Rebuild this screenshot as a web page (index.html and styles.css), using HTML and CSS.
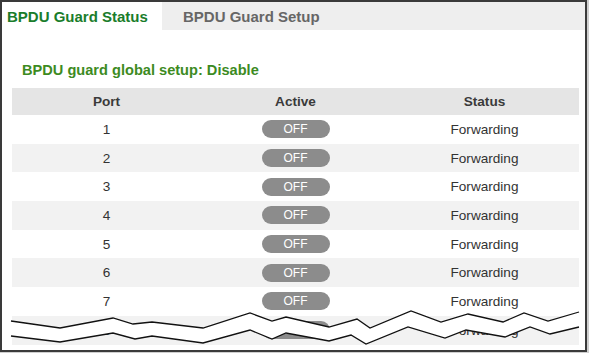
FILE: index.html
```html
<!DOCTYPE html>
<html lang="en">
<head>
  <meta charset="UTF-8">
  <title>BPDU Guard Status</title>
  <link rel="stylesheet" href="styles.css">
</head>
<body>
  <div class="frame">
    <div class="tabs">
      <div class="tab active">BPDU Guard Status</div>
      <div class="tab">BPDU Guard Setup</div>
    </div>

    <h2 class="global">BPDU guard global setup: Disable</h2>

    <table class="ports">
      <thead>
        <tr><th>Port</th><th>Active</th><th>Status</th></tr>
      </thead>
      <tbody>
        <tr><td>1</td><td><span class="pill">OFF</span></td><td>Forwarding</td></tr>
        <tr><td>2</td><td><span class="pill">OFF</span></td><td>Forwarding</td></tr>
        <tr><td>3</td><td><span class="pill">OFF</span></td><td>Forwarding</td></tr>
        <tr><td>4</td><td><span class="pill">OFF</span></td><td>Forwarding</td></tr>
        <tr><td>5</td><td><span class="pill">OFF</span></td><td>Forwarding</td></tr>
        <tr><td>6</td><td><span class="pill">OFF</span></td><td>Forwarding</td></tr>
        <tr><td>7</td><td><span class="pill">OFF</span></td><td>Forwarding</td></tr>
        <tr><td>8</td><td><span class="pill">OFF</span></td><td>Forwarding</td></tr>
      </tbody>
    </table>

    <!-- torn-page break across the last row -->
    <svg class="tear" viewBox="0 0 589 353" xmlns="http://www.w3.org/2000/svg">
      <polygon class="tear-fill" points="11,321 60,328 113,318 133,324 152,322 203,328 250,313 272,321 286,317 329,327 357,319 370,328 411,311 441,322 468,314 503,322 524,313 548,321 579,312 579,327 550,334 530,327 505,337 466,330 445,338 408,327 366,344 351,335 329,341 286,333 272,339 250,330 203,343 152,336 135,339 113,333 60,342 11,336"/>
      <polyline class="tear-line" points="11,321 60,328 113,318 133,324 152,322 203,328 250,313 272,321 286,317 329,327 357,319 370,328 411,311 441,322 468,314 503,322 524,313 548,321 579,312"/>
      <polyline class="tear-line" points="11,336 60,342 113,333 135,339 152,336 203,343 250,330 272,339 286,333 329,341 351,335 366,344 408,327 445,338 466,330 505,337 530,327 550,334 579,327"/>
    </svg>
  </div>
</body>
</html>
```

FILE: styles.css
```css
body {
  margin: 0;
  background: #cfcfcf;
  font-family: "Liberation Sans", Arial, sans-serif;
}
.frame {
  position: relative;
  width: 583px;
  height: 348px;
  border: 2px solid #3a3a3a;
  background: #fff;
  overflow: hidden;
}
.tabs {
  display: flex;
  height: 28px;
  background: #eeeeee;
}
.tab {
  box-sizing: border-box;
  width: 160px;
  padding: 6px 0 0 21px;
  font-size: 15px;
  font-weight: bold;
  color: #666;
}
.tab.active {
  background: #fff;
  color: #1a7d2b;
  padding-left: 5px;
}
.global {
  margin: 32px 0 10px 20px;
  font-size: 14.6px;
  line-height: 16px;
  font-weight: bold;
  color: #3d8b1f;
}
.ports {
  width: 567px;
  margin-left: 10px;
  border-collapse: collapse;
  table-layout: fixed;
  font-size: 13.6px;
  color: #333;
}
.ports th {
  height: 27px;
  padding: 0;
  background: #e5e5e5;
  font-weight: bold;
  color: #3a3a3a;
}
.ports td {
  height: 28.7px;
  padding: 0;
  text-align: center;
}
.ports tbody tr:nth-child(even) td {
  background: #f2f2f2;
}
.pill {
  display: inline-block;
  width: 68px;
  height: 18px;
  line-height: 18px;
  border-radius: 9px;
  background: #8c8c8c;
  color: #fff;
  font-size: 12px;
  vertical-align: middle;
}
.tear {
  position: absolute;
  left: -2px;
  top: -2px;
  width: 589px;
  height: 353px;
  pointer-events: none;
}
.tear-fill {
  fill: #fff;
}
.tear-line {
  fill: none;
  stroke: #111;
  stroke-width: 1.3;
  stroke-linejoin: miter;
}
```
